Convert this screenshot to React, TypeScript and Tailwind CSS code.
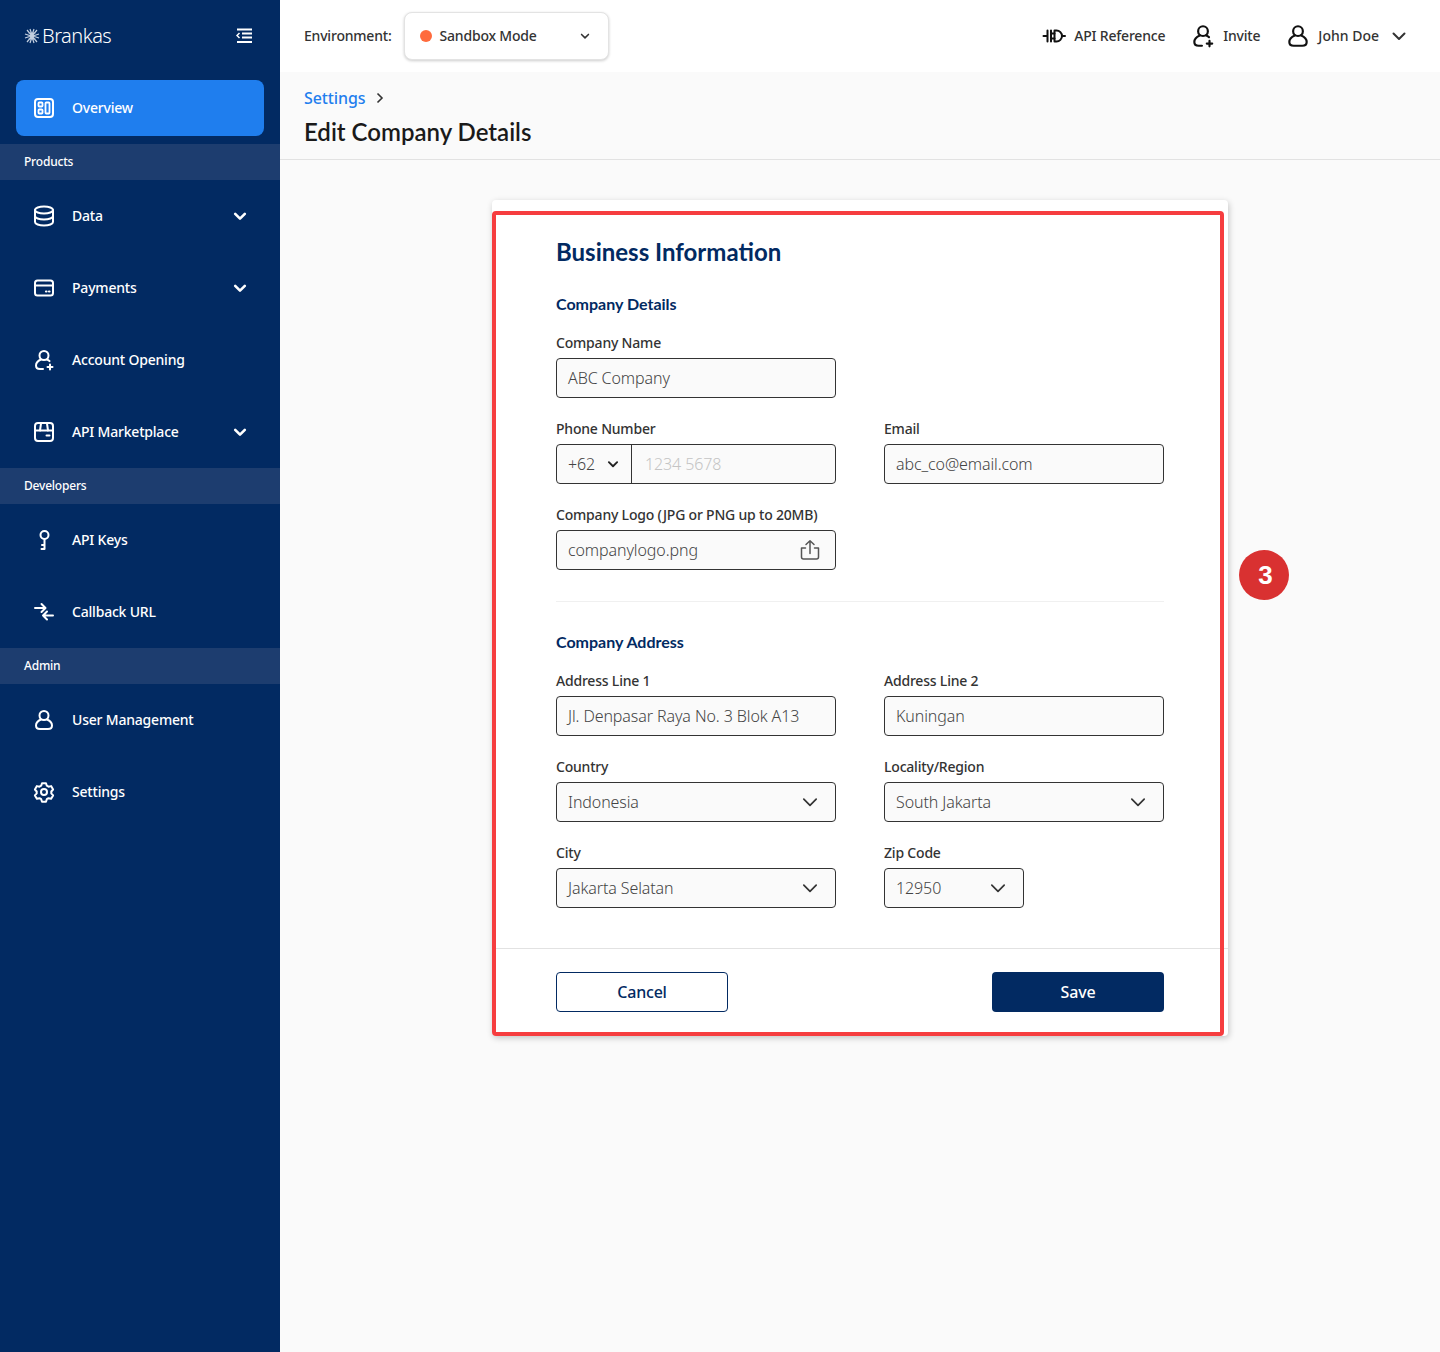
import { ReactNode } from 'react';

const font = { ui: 'font-["Noto_Sans",sans-serif]', head: 'font-["Lato",sans-serif] tracking-normal' };

const Svg = ({ children, size = 24 }: { children: ReactNode; size?: number }) => (
  <svg
    width={size}
    height={size}
    viewBox="0 0 24 24"
    fill="none"
    stroke="currentColor"
    strokeWidth={2}
    strokeLinecap="round"
    strokeLinejoin="round"
    className="shrink-0"
  >
    {children}
  </svg>
);

const BrandMark = () => (
  <svg width={16} height={16} viewBox="0 0 16 16" fill="none" stroke="#c3cfe0" strokeWidth={1.200} className="shrink-0">
    <path d="M3 2l10 12M13 2L3 14M1 6l6 2-6 2M15 6L9 8l6 2M6 1l2 6 2-6M6 15l2-6 2 6M4.500 5h7M4.500 11h7" />
  </svg>
);

const CollapseIcon = () => (
  <svg width={16} height={16} viewBox="0 0 16 16" fill="none" stroke="currentColor" strokeWidth={2}>
    <path d="M1 1.500h15M6 5.500h10M6 9.500h10M1 14h15" />
    <path d="M3.500 5L1 7.500 3.500 10" strokeWidth={1.500} />
  </svg>
);

const OverviewIcon = () => (
  <Svg>
    <rect x={3} y={3} width={18} height={18} rx={3} />
    <rect x={6.500} y={6.500} width={4} height={4} rx={0.800} strokeWidth={1.800} />
    <rect x={6.500} y={13.500} width={4} height={4} rx={0.800} strokeWidth={1.800} />
    <rect x={13.500} y={6.500} width={4} height={11} rx={0.800} strokeWidth={1.800} />
  </Svg>
);

const DataIcon = () => (
  <Svg>
    <ellipse cx={12} cy={6} rx={9} ry={3.500} />
    <path d="M3 6v12c0 1.900 4 3.500 9 3.500s9-1.600 9-3.500V6" />
    <path d="M3 12c0 1.900 4 3.500 9 3.500s9-1.600 9-3.500" />
  </Svg>
);

const PaymentsIcon = () => (
  <Svg>
    <rect x={3} y={4.500} width={18} height={15} rx={2.500} />
    <path d="M3 9.500h18" />
    <path d="M14 15.500h.5M17 15.500h.5" strokeWidth={2.200} />
  </Svg>
);

const UserPlusIcon = ({ size }: { size?: number }) => (
  <Svg size={size}>
    <circle cx={12} cy={7.500} r={4.500} />
    <path d="M9 11.500c-3 1.300-5 3.500-5 6 0 2.200 1.800 3.500 4 3.500h3" />
    <path d="M15 11.500c1 .4 1.800 1 2.500 1.600" />
    <path d="M18 16.500v5M15.500 19h5" />
  </Svg>
);

const UserIcon = ({ size }: { size?: number }) => (
  <Svg size={size}>
    <circle cx={12} cy={7.500} r={4.500} />
    <path d="M9 11.500c-3 1.300-5 3.500-5 6 0 2.200 1.800 3.500 4 3.500h8c2.200 0 4-1.300 4-3.500 0-2.500-2-4.700-5-6" />
  </Svg>
);

const MarketIcon = () => (
  <Svg>
    <path d="M3 10.500V6c0-1.700 1.300-3 3-3h12c1.700 0 3 1.300 3 3v4.500" />
    <path d="M3 10.500h18V18c0 1.700-1.300 3-3 3H6c-1.700 0-3-1.300-3-3z" />
    <path d="M9 3.500l-1 7M15 3.500l1 7" />
    <path d="M14.500 15.500h3" />
  </Svg>
);

const KeyIcon = () => (
  <Svg>
    <circle cx={12.500} cy={7} r={4} />
    <path d="M12.500 11v10H9.500M12.500 17H10" />
  </Svg>
);

const CallbackIcon = () => (
  <Svg>
    <path d="M3 8h10M9.500 4l4 4-4 4" />
    <path d="M21 15.500H11M15 11.500l-4 4 4 4" />
  </Svg>
);

const GearIcon = () => (
  <Svg>
    <circle cx={12} cy={12} r={3} />
    <path d="M10 3.200h4l.8 2.500 1.700 1 2.600-.6 2 3.400-1.800 2 0 1.900 1.800 2-2 3.400-2.600-.6-1.700 1-.8 2.600h-4l-.8-2.600-1.700-1-2.600.6-2-3.400 1.800-2 0-1.900-1.800-2 2-3.400 2.600.6 1.700-1z" />
  </Svg>
);

const PlugIcon = () => (
  <Svg>
    <path d="M1.500 12h3M5.500 6.500v11M9 6.500v11M9 9.500h3.500M9 14.500h3.500" />
    <path d="M12.500 6.500h2a5.500 5.500 0 0 1 0 11h-2z" />
    <path d="M20 12h3" />
  </Svg>
);

const UploadIcon = () => (
  <Svg>
    <path d="M12 15.500V3M8 6.500L12 2.800l4 3.700" strokeWidth={1.500} />
    <path d="M7.500 10H3.500v9c0 1.200 1 2 2 2h13c1 0 2-.8 2-2v-9h-4" strokeWidth={1.500} />
  </Svg>
);

const Chevron = ({ size = 16, width = 2 }: { size?: number; width?: number }) => (
  <svg
    width={size}
    height={size}
    viewBox="0 0 16 16"
    fill="none"
    stroke="currentColor"
    strokeWidth={width}
    strokeLinecap="round"
    strokeLinejoin="round"
    className="shrink-0"
  >
    <path d="M2.500 5.500L8 11l5.500-5.500" />
  </svg>
);

const NavItem = ({ icon, label, chevron }: { icon: ReactNode; label: string; chevron?: boolean }) => (
  <div className="flex h-[72px] items-center pl-8 pr-[33px] text-white">
    {icon}
    <span className="ml-4 flex-1 text-sm font-medium">{label}</span>
    {chevron && <Chevron size={14} width={3} />}
  </div>
);

const NavSection = ({ label }: { label: string }) => (
  <div className="flex h-9 items-center bg-[#1d3d6f] pl-6 text-xs font-medium text-white">{label}</div>
);

const Sidebar = () => (
  <aside className="flex w-[280px] shrink-0 flex-col bg-[#022a62]">
    <div className="flex h-20 items-start justify-between pl-6 pr-7 pt-7 text-white">
      <div className="flex h-4 items-center gap-[2px]">
        <BrandMark />
        <span className="text-xl font-light tracking-[-0.5px]">Brankas</span>
      </div>
      <CollapseIcon />
    </div>
    <div className="mx-4 mb-2 flex h-14 items-center rounded-lg bg-[#1f7eee] pl-4 text-white">
      <OverviewIcon />
      <span className="ml-4 text-sm font-medium">Overview</span>
    </div>
    <NavSection label="Products" />
    <NavItem icon={<DataIcon />} label="Data" chevron />
    <NavItem icon={<PaymentsIcon />} label="Payments" chevron />
    <NavItem icon={<UserPlusIcon />} label="Account Opening" />
    <NavItem icon={<MarketIcon />} label="API Marketplace" chevron />
    <NavSection label="Developers" />
    <NavItem icon={<KeyIcon />} label="API Keys" />
    <NavItem icon={<CallbackIcon />} label="Callback URL" />
    <NavSection label="Admin" />
    <NavItem icon={<UserIcon />} label="User Management" />
    <NavItem icon={<GearIcon />} label="Settings" />
  </aside>
);

const TopBar = () => (
  <header className="flex h-[72px] items-center bg-white pl-6 pr-[33px] text-sm font-medium text-[#333]">
    <span>Environment:</span>
    <div className="ml-3 flex h-12 w-[205px] items-center rounded-lg border border-[#e3e3e3] bg-white pl-[15px] pr-[18px] shadow-[0_1px_3px_rgba(0,0,0,0.2)]">
      <span className="h-3 w-3 rounded-full bg-[#ff6b3d]" />
      <span className="ml-2 flex-1">Sandbox Mode</span>
      <Chevron size={10} width={2.500} />
    </div>
    <div className="ml-auto flex items-center text-[#333]">
      <span className="text-[#111]">
        <PlugIcon />
      </span>
      <span className="ml-2">API Reference</span>
      <span className="ml-[25px] text-[#111]">
        <UserPlusIcon size={26} />
      </span>
      <span className="ml-[7px]">Invite</span>
      <span className="ml-[25px] text-[#111]">
        <UserIcon size={26} />
      </span>
      <span className="ml-[7px] tracking-normal">John Doe</span>
      <span className="ml-3">
        <Chevron size={16} width={2} />
      </span>
    </div>
  </header>
);

const Field = ({ label, children, className }: { label: string; children: ReactNode; className?: string }) => (
  <div className={className}>
    <div className="mb-[5px] h-5 text-sm leading-5 font-medium text-[#333]">{label}</div>
    {children}
  </div>
);

const boxClass =
  'flex h-10 items-center rounded border border-[#333] bg-[#fafafa] text-base font-light tracking-[-0.1px] text-[#444]';

const TextBox = ({ value }: { value: string }) => <div className={`${boxClass} px-[11px]`}>{value}</div>;

const SelectBox = ({ value }: { value: string }) => (
  <div className={`${boxClass} justify-between pl-[11px] pr-[16px]`}>
    <span>{value}</span>
    <span className="text-[#333]">
      <Chevron size={18} width={1.500} />
    </span>
  </div>
);

const SectionTitle = ({ children, className }: { children: ReactNode; className?: string }) => (
  <h3 className={`h-6 text-base leading-6 font-bold text-[#022a62] ${font.head} ${className ?? ''}`}>{children}</h3>
);

const FormCard = () => (
  <div className="relative h-[836px] w-[736px] rounded bg-white shadow-[1px_2px_6px_rgba(0,0,0,0.22)]">
    <div className="px-16 pt-9">
      <h2 className={`h-8 text-2xl leading-8 font-bold text-[#022a62] ${font.head}`}>Business Information</h2>
      <SectionTitle className="mt-6">Company Details</SectionTitle>
      <div className="mt-[17px] grid grid-cols-[280px_280px] gap-x-12 gap-y-[21px]">
        <Field label="Company Name" className="col-span-2 w-[280px]">
          <TextBox value="ABC Company" />
        </Field>
        <Field label="Phone Number">
          <div className={boxClass}>
            <div className="flex h-full w-[75px] items-center justify-between border-r border-[#333] pl-[11px] pr-3">
              <span>+62</span>
              <span className="text-[#222]">
                <Chevron size={12} width={2.500} />
              </span>
            </div>
            <span className="ml-[13px] text-[#c4c4c4]">1234 5678</span>
          </div>
        </Field>
        <Field label="Email">
          <TextBox value="abc_co@email.com" />
        </Field>
        <Field label="Company Logo (JPG or PNG up to 20MB)">
          <div className={`${boxClass} justify-between pl-[11px] pr-[13px]`}>
            <span>companylogo.png</span>
            <span className="text-[#555]">
              <UploadIcon />
            </span>
          </div>
        </Field>
      </div>
      <div className="mt-[31px] border-t border-[#f0f0f0]" />
      <SectionTitle className="mt-7">Company Address</SectionTitle>
      <div className="mt-[17px] grid grid-cols-[280px_280px] gap-x-12 gap-y-[21px]">
        <Field label="Address Line 1">
          <TextBox value="Jl. Denpasar Raya No. 3 Blok A13" />
        </Field>
        <Field label="Address Line 2">
          <TextBox value="Kuningan" />
        </Field>
        <Field label="Country">
          <SelectBox value="Indonesia" />
        </Field>
        <Field label="Locality/Region">
          <SelectBox value="South Jakarta" />
        </Field>
        <Field label="City">
          <SelectBox value="Jakarta Selatan" />
        </Field>
        <Field label="Zip Code" className="w-[140px]">
          <SelectBox value="12950" />
        </Field>
      </div>
    </div>
    <div className="mt-10 flex justify-between border-t border-[#e2e2e2] px-16 pt-[23px]">
      <button className="h-10 w-[172px] rounded border border-[#022a62] bg-white text-base font-medium text-[#022a62]">
        Cancel
      </button>
      <button className="h-10 w-[172px] rounded bg-[#022a62] text-base font-medium text-white">Save</button>
    </div>
    <div className="absolute left-0 top-[11px] h-[825px] w-[732px] rounded border-4 border-[#f63d3f]" />
    <div className='absolute left-[747px] top-[350px] flex h-[50px] w-[50px] items-center justify-center rounded-full bg-[#d93131] pl-[3px] pt-px font-["Liberation_Sans",sans-serif] text-[26px] font-bold tracking-normal text-white'>
      3
    </div>
  </div>
);

export default function App() {
  return (
    <div className={`flex h-[1352px] w-[1440px] overflow-hidden bg-[#fafafa] tracking-[-0.2px] ${font.ui}`}>
      <Sidebar />
      <main className="flex flex-1 flex-col">
        <TopBar />
        <div className="h-[88px] border-b border-[#e2e2e2] pl-6 pt-[14px]">
          <div className="flex h-6 items-center text-base font-medium tracking-[-0.1px] text-[#1f7eee]">
            Settings
            <span className="ml-2 text-[#333]">
              <svg width={12} height={12} viewBox="0 0 12 12" fill="none" stroke="currentColor" strokeWidth={1.600}>
                <path d="M3.500 1.500L8 6l-4.500 4.500" />
              </svg>
            </span>
          </div>
          <h1 className={`mt-1.5 h-8 text-2xl leading-8 font-semibold text-[#1a1a1a] ${font.head}`}>
            Edit Company Details
          </h1>
        </div>
        <div className="flex justify-center pt-10">
          <FormCard />
        </div>
      </main>
    </div>
  );
}
